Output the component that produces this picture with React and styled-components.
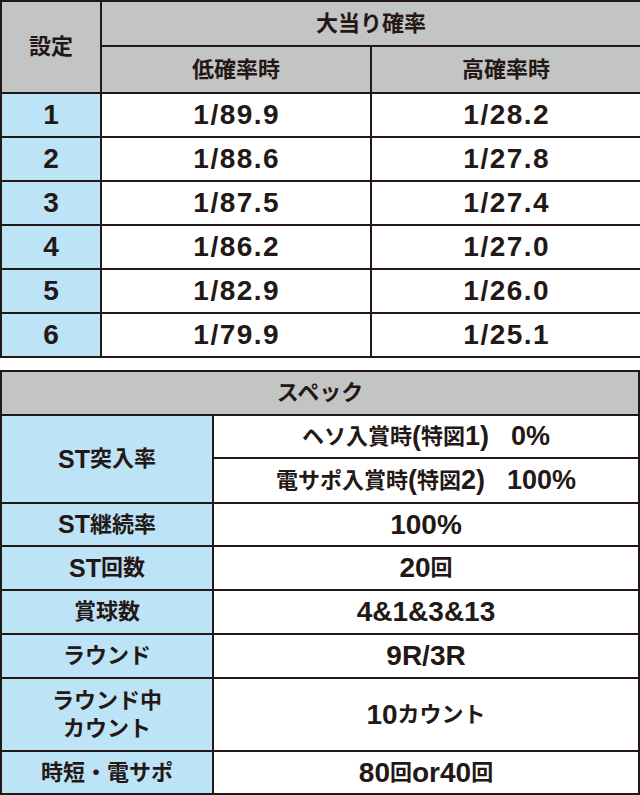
import React from "react";
import styled, { createGlobalStyle } from "styled-components";

const GlobalStyle = createGlobalStyle`
  html, body {
    margin: 0;
    padding: 0;
    background: #ffffff;
  }
  body {
    font-family: "Liberation Sans", "Noto Sans CJK JP", sans-serif;
    color: #231815;
  }
`;

// 全体
const Page = styled.div`
  width: 640px;
  display: flex;
  flex-direction: column;
  gap: 12px;
`;

// 罫線は背景色 + gap で描く
const Grid = styled.div`
  display: grid;
  grid-template-columns: ${(p) => p.$cols};
  grid-template-rows: ${(p) => p.$rows};
  gap: 2px;
  padding: 2px;
  background: #231815;
`;

const cellBg = {
  head: "#c3c4c4",
  label: "#bde3f7",
  value: "#ffffff",
};

const Cell = styled.div`
  display: flex;
  align-items: center;
  justify-content: center;
  text-align: center;
  background: ${(p) => cellBg[p.$kind || "value"]};
  grid-column: ${(p) => p.$col || "auto"};
  grid-row: ${(p) => p.$row || "auto"};
  font-size: 22px;
  font-weight: 700;
  line-height: 28px;
`;

// 英数字は和文より大きく見えるので別サイズ
const Num = styled.span`
  font-size: ${(p) => p.$size || 27}px;
  letter-spacing: ${(p) => p.$track || 0}px;
  line-height: 1;
`;

// 大当り確率の数字
const Rate = styled(Num).attrs({ $size: 28, $track: 1.5 })`
  margin-right: -1.5px;
`;

// 文字列を英数字とそれ以外に分けて英数字を Num で包む
const Mixed = ({ text, size }) =>
  text
    .split(/([A-Za-z0-9/.%&()]+)/)
    .filter(Boolean)
    .map((part, i) =>
      /^[A-Za-z0-9/.%&()]+$/.test(part) ? (
        <Num key={i} $size={size}>
          {part}
        </Num>
      ) : (
        <React.Fragment key={i}>{part}</React.Fragment>
      )
    );

const rates = [
  ["1", "1/89.9", "1/28.2"],
  ["2", "1/88.6", "1/27.8"],
  ["3", "1/87.5", "1/27.4"],
  ["4", "1/86.2", "1/27.0"],
  ["5", "1/82.9", "1/26.0"],
  ["6", "1/79.9", "1/25.1"],
];

const specs = [
  ["ST継続率", "100%"],
  ["ST回数", "20回"],
  ["賞球数", "4&1&3&13"],
  ["ラウンド", "9R/3R"],
  [["ラウンド中", "カウント"], "10カウント"],
  ["時短・電サポ", "80回or40回"],
];

const App = () => {
  return (
    <>
      <GlobalStyle />
      <Page>
        <Grid $cols="98px 268px 268px" $rows="43px 45px repeat(6, 42px)">
          <Cell $kind="head" $row="1 / span 2">
            設定
          </Cell>
          <Cell $kind="head" $col="2 / span 2">
            大当り確率
          </Cell>
          <Cell $kind="head">低確率時</Cell>
          <Cell $kind="head">高確率時</Cell>
          {rates.map(([set, low, high]) => (
            <React.Fragment key={set}>
              <Cell $kind="label">
                <Rate>{set}</Rate>
              </Cell>
              <Cell>
                <Rate>{low}</Rate>
              </Cell>
              <Cell>
                <Rate>{high}</Rate>
              </Cell>
            </React.Fragment>
          ))}
        </Grid>

        <Grid
          $cols="210px 424px"
          $rows="42px 41px 43px 41px 42px 42px 42px 71px 41px"
        >
          <Cell $kind="head" $col="1 / span 2">
            スペック
          </Cell>
          <Cell $kind="label" $row="2 / span 2">
            <Mixed text="ST突入率" size={25} />
          </Cell>
          <Cell>
            <Mixed text="ヘソ入賞時(特図1)　0%" size={27} />
          </Cell>
          <Cell>
            <Mixed text="電サポ入賞時(特図2)　100%" size={27} />
          </Cell>
          {specs.map(([label, value], i) => (
            <React.Fragment key={i}>
              <Cell $kind="label">
                {Array.isArray(label) ? (
                  <span>
                    {label[0]}
                    <br />
                    {label[1]}
                  </span>
                ) : (
                  <Mixed text={label} size={25} />
                )}
              </Cell>
              <Cell>
                <Mixed text={value} size={28} />
              </Cell>
            </React.Fragment>
          ))}
        </Grid>
      </Page>
    </>
  );
};

export default App;
